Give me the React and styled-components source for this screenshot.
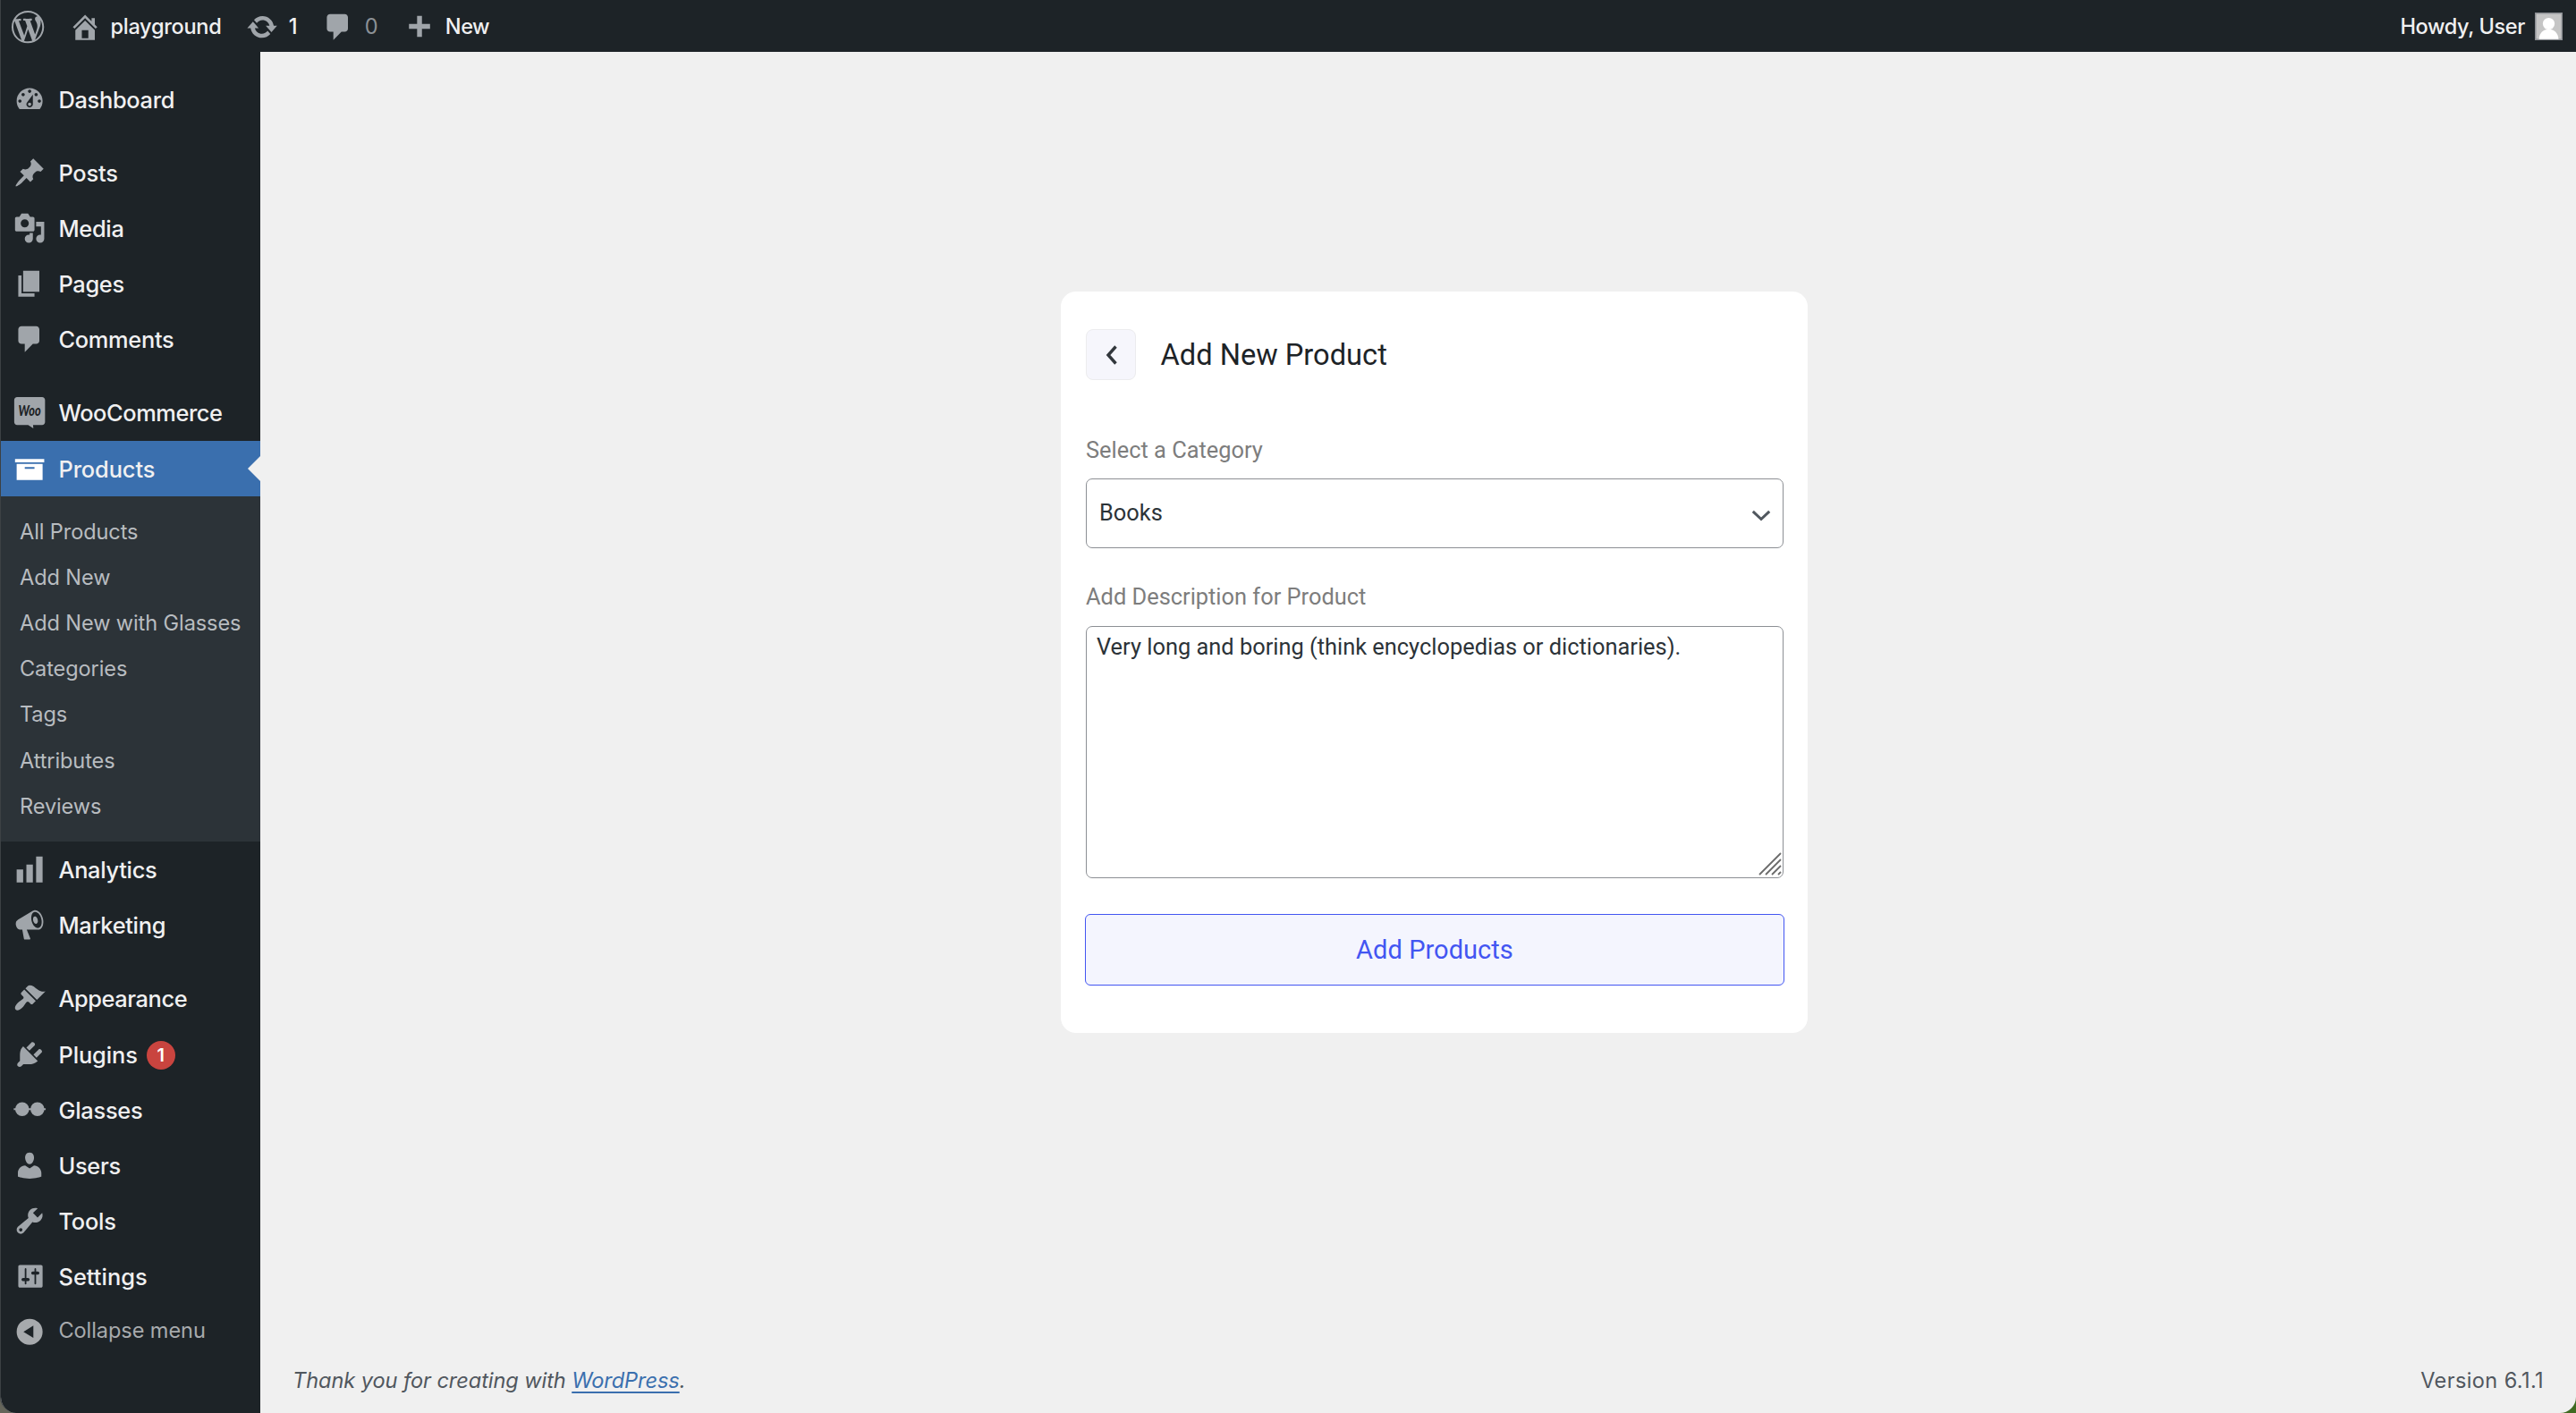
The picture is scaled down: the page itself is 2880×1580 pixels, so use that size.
import React from "react";
import styled, { createGlobalStyle, css } from "styled-components";

const icons = {
  wordpress: "M20 10c0-5.51-4.49-10-10-10C4.48 0 0 4.49 0 10c0 5.52 4.48 10 10 10 5.51 0 10-4.48 10-10zM7.78 15.37L4.37 6.22c.55-.02 1.17-.08 1.17-.08.5-.06.44-1.13-.06-1.11 0 0-1.45.11-2.37.11-.18 0-.37 0-.58-.01C4.12 2.69 6.87 1.11 10 1.11c2.33 0 4.45.87 6.05 2.34-.68-.11-1.65.39-1.65 1.58 0 .74.45 1.36.9 2.1.35.61.55 1.36.55 2.46 0 1.49-1.4 5-1.4 5l-3.03-8.37c.54-.02.82-.17.82-.17.5-.05.44-1.25-.06-1.22 0 0-1.44.12-2.38.12-.87 0-2.33-.12-2.33-.12-.5-.03-.56 1.2-.06 1.22l.92.08 1.26 3.41zM17.41 10c.24-.64.74-1.87.43-4.25.7 1.29 1.05 2.71 1.05 4.25 0 3.29-1.73 6.24-4.4 7.78.97-2.59 1.94-5.2 2.92-7.78zM6.1 18.09C3.12 16.65 1.11 13.53 1.11 10c0-1.3.23-2.48.72-3.59C3.25 10.3 4.67 14.2 6.1 18.09zm4.03-6.63l2.58 6.98c-.86.29-1.76.45-2.71.45-.79 0-1.57-.11-2.29-.33.81-2.38 1.62-4.74 2.42-7.1z",
  home: "M16 8.5l1.53 1.53-1.06 1.06L10 4.6l-6.47 6.49-1.06-1.06L10 2.5l4 4v-2h2v4zm-6-2.46l6 5.99V18H4v-5.97zM12 17v-5H8v5h4z",
  update: "M10.2 3.28c3.53 0 6.43 2.61 6.92 6h2.08l-3.5 4-3.5-4h2.32c-.45-1.97-2.21-3.45-4.32-3.45-1.45 0-2.73.71-3.54 1.78L4.95 5.66C6.23 4.2 8.11 3.28 10.2 3.28zm-.4 13.44c-3.52 0-6.43-2.61-6.92-6H.8l3.5-4c1.17 1.33 2.33 2.67 3.5 4H5.48c.45 1.97 2.21 3.45 4.32 3.45 1.45 0 2.73-.71 3.54-1.78l1.71 1.95c-1.28 1.46-3.15 2.38-5.25 2.38z",
  comments: "M5 2h9c1.1 0 2 .9 2 2v7c0 1.1-.9 2-2 2h-2l-5 5v-5H5c-1.1 0-2-.9-2-2V4c0-1.1.9-2 2-2z",
  plus: "M17 7v3h-5v5H9v-5H4V7h5V2h3v5h5z",
  dashboard: "M3.76 16h12.48c1.1-1.37 1.76-3.11 1.76-5 0-4.42-3.58-8-8-8s-8 3.58-8 8c0 1.89.66 3.63 1.76 5zM10 4c.55 0 1 .45 1 1s-.45 1-1 1-1-.45-1-1 .45-1 1-1zM6 6c.55 0 1 .45 1 1s-.45 1-1 1-1-.45-1-1 .45-1 1-1zm8 0c.55 0 1 .45 1 1s-.45 1-1 1-1-.45-1-1 .45-1 1-1zm-5.37 5.55L12 7v6c0 1.1-.9 2-2 2s-2-.9-2-2c0-.57.24-1.08.63-1.45zM4 10c.55 0 1 .45 1 1s-.45 1-1 1-1-.45-1-1 .45-1 1-1zm12 0c.55 0 1 .45 1 1s-.45 1-1 1-1-.45-1-1 .45-1 1-1zm-5 3c0-.55-.45-1-1-1s-1 .45-1 1 .45 1 1 1 1-.45 1-1z",
  post: "M10.44 3.02l1.82-1.82 6.36 6.35-1.83 1.82c-1.05-.68-2.48-.57-3.41.36l-.75.75c-.92.93-1.04 2.35-.35 3.41l-1.83 1.82-2.41-2.41-2.8 2.79c-.42.42-3.38 2.71-3.8 2.29s1.86-3.39 2.28-3.81l2.79-2.79L4.1 9.36l1.83-1.82c1.05.69 2.48.57 3.4-.36l.75-.75c.93-.92 1.05-2.35.36-3.41z",
  media: "M13 11V4c0-.55-.45-1-1-1h-1.67L9 1H5L3.67 3H2c-.55 0-1 .45-1 1v7c0 .55.45 1 1 1h10c.55 0 1-.45 1-1zM7 4.5c1.38 0 2.5 1.12 2.5 2.5S8.38 9.5 7 9.5 4.5 8.38 4.5 7 5.62 4.5 7 4.5zM14 6h5v10.5c0 1.38-1.12 2.5-2.5 2.5S14 17.88 14 16.5s1.12-2.5 2.5-2.5c.17 0 .34.02.5.05V9h-3V6zm-4 8.05V13h2v3.5c0 1.38-1.12 2.5-2.5 2.5S7 17.88 7 16.5 8.12 14 9.5 14c.17 0 .34.02.5.05z",
  page: "M6 15V2h10v13H6zm-1 1h8v2H3V5h2v11z",
  archive: "M19 4v2H1V4h18zM2 7h16v10H2V7zm11 3V9H7v1h6z",
  chart: "M18 18V2h-4v16h4zm-6 0V7H8v11h4zm-6 0v-8H2v8h4z",
  megaphone: "M18.15 5.94c.46 1.62.38 3.22-.02 4.48-.42 1.28-1.26 2.18-2.3 2.48-.16.06-.26.06-.4.06-.06.02-.12.02-.18.02-.06.02-.14.02-.22.02h-6.8l2.22 5.5c.02.14-.06.26-.14.34-.08.1-.24.16-.34.16H6.95c-.1 0-.26-.06-.34-.16-.08-.08-.16-.2-.14-.34l-1-5.5H4.25l-.02-.02c-.5.06-1.08-.18-1.54-.62s-.88-1.08-1.06-1.88c-.24-.8-.2-1.56-.02-2.2.18-.62.58-1.08 1.06-1.3l.02-.02 9-5.4c.1-.06.18-.1.24-.16.06-.04.14-.08.24-.12.16-.08.28-.12.5-.18 1.04-.3 2.24.1 3.22.98s1.84 2.24 2.26 3.86zm-2.58 5.98h-.02c.4-.1.74-.34 1.04-.7.58-.7.86-1.76.86-3.04 0-.64-.1-1.3-.28-1.98-.34-1.36-1.02-2.5-1.78-3.24s-1.68-1.1-2.46-.88c-.82.22-1.4.96-1.7 2-.32 1.04-.28 2.36.06 3.72.38 1.36 1 2.5 1.8 3.24.78.74 1.62 1.1 2.48.88zm-2.54-7.08c.22-.04.42-.02.62.04.38.16.76.48 1.02 1s.42 1.2.42 1.78c0 .3-.04.56-.12.8-.18.48-.44.84-.86.94-.34.1-.8-.06-1.14-.4s-.64-.86-.78-1.5c-.18-.62-.12-1.24.02-1.72s.48-.84.82-.94z",
  appearance: "M14.48 11.06L7.41 3.99l1.5-1.5c.5-.56 2.3-.47 3.51.32 1.21.8 1.43 1.28 2.91 2.1 1.18.64 2.45 1.26 4.45.85zm-.71.71L6.7 4.7 4.93 6.47c-.39.39-.39 1.02 0 1.41l1.06 1.06c.39.39.39 1.03 0 1.42-.6.6-1.43 1.11-2.21 1.69-.35.26-.7.53-1.01.84C1.43 14.23.4 16.08 1.4 17.07c.99 1 2.84-.03 4.18-1.36.31-.31.58-.66.85-1.02.57-.78 1.08-1.61 1.69-2.21.39-.39 1.02-.39 1.41 0l1.06 1.06c.39.39 1.02.39 1.41 0z",
  plugins: "M13.11 4.36L9.87 7.6 8 5.73l3.24-3.24c.35-.34 1.05-.2 1.56.32.52.51.66 1.21.31 1.55zm-8 1.77l.91-1.12 9.01 9.01-1.19.84c-.71.71-2.63 1.16-3.82 1.16H6.14L4.9 17.26c-.59.59-1.54.59-2.12 0-.59-.58-.59-1.53 0-2.12l1.24-1.24v-3.88c0-1.13.4-3.19 1.09-3.89zm7.26 3.97l3.24-3.24c.34-.35 1.04-.21 1.55.31.52.51.66 1.21.31 1.55l-3.24 3.25z",
  users: "M10 9.25c-2.27 0-2.73-3.44-2.73-3.44C7 4.02 7.82 2 9.97 2c2.16 0 2.98 2.02 2.71 3.81 0 0-.41 3.44-2.68 3.44zm0 2.57L12.72 10c2.39 0 4.52 2.33 4.52 4.53v2.49s-3.65 1.13-7.24 1.13c-3.65 0-7.24-1.13-7.24-1.13v-2.49c0-2.25 1.94-4.48 4.47-4.48z",
  tools: "M16.68 9.77c-1.34 1.34-3.3 1.67-4.95.99l-5.41 6.52c-.99.99-2.59.99-3.58 0s-.99-2.59 0-3.57l6.52-5.42c-.68-1.65-.35-3.61.99-4.95 1.28-1.28 3.12-1.62 4.72-1.06l-2.89 2.89 2.82 2.82 2.86-2.87c.53 1.58.18 3.39-1.08 4.65zM3.81 16.21c.4.39 1.04.39 1.43 0 .4-.4.4-1.04 0-1.43-.39-.4-1.03-.4-1.43 0-.39.39-.39 1.03 0 1.43z",
  settings: "M18 16V4c0-.55-.45-1-1-1H4c-.55 0-1 .45-1 1v12c0 .55.45 1 1 1h13c.55 0 1-.45 1-1zM8 11h1c.55 0 1 .45 1 1s-.45 1-1 1H8v1.5c0 .28-.22.5-.5.5s-.5-.22-.5-.5V13H6c-.55 0-1-.45-1-1s.45-1 1-1h1V5.5c0-.28.22-.5.5-.5s.5.22.5.5V11zm5-2h-1c-.55 0-1-.45-1-1s.45-1 1-1h1V5.5c0-.28.22-.5.5-.5s.5.22.5.5V7h1c.55 0 1 .45 1 1s-.45 1-1 1h-1v5.5c0 .28-.22.5-.5.5s-.5-.22-.5-.5V9z",
  collapse: "M10 2a8 8 0 1 0 0 16 8 8 0 0 0 0-16zm2.3 4.2v7.6L6.2 10z",
};

const menu = [
  { icon: "dashboard", label: "Dashboard", track: -0.3, space: 20 },
  { icon: "post", label: "Posts", track: -0.2 },
  { icon: "media", label: "Media", track: -0.3 },
  { icon: "page", label: "Pages", track: -0.3 },
  { icon: "comments", label: "Comments", track: -0.3, space: 20 },
  { icon: "woo", label: "WooCommerce", track: -0.42, space: 1 },
  {
    icon: "archive",
    label: "Products",
    track: -0.1,
    current: true,
    children: ["All Products", "Add New", "Add New with Glasses", "Categories", "Tags", "Attributes", "Reviews"],
  },
  { icon: "chart", label: "Analytics", track: -0.3 },
  { icon: "megaphone", label: "Marketing", track: -0.3, space: 20 },
  { icon: "appearance", label: "Appearance", track: -0.42 },
  { icon: "plugins", label: "Plugins", track: -0.1, count: 1 },
  { icon: "glasses", label: "Glasses", track: -0.25 },
  { icon: "users", label: "Users", track: -0.3 },
  { icon: "tools", label: "Tools", track: -0.2 },
  { icon: "settings", label: "Settings", track: 0.05 },
];

const DashIcon = ({ name }) => {
  if (name === "woo") {
    return (
      <IconSvg viewBox="0 0 20 20">
        <path d="M2.3.6h15.4c1 0 1.8.8 1.8 1.8V16c0 1-.8 1.8-1.8 1.8h-5.6l.2 2.1-3.2-2.1H2.3c-1 0-1.8-.8-1.8-1.8V2.4C.5 1.4 1.3.6 2.3.6z" />
        <WooText x="3.1" y="12.2" textLength="13.8" lengthAdjust="spacingAndGlyphs">Woo</WooText>
      </IconSvg>
    );
  }
  if (name === "glasses") {
    return (
      <IconSvg viewBox="0 0 20 20">
        <circle cx="5.4" cy="9.5" r="4.3" />
        <circle cx="14.8" cy="9.5" r="4.3" />
        <path d="M.2 8.9h19.7v1.2H.2z" />
      </IconSvg>
    );
  }
  return (
    <IconSvg viewBox="0 0 20 20">
      <path fillRule="evenodd" d={icons[name]} />
    </IconSvg>
  );
};

const App = () => (
  <Screen>
    <GlobalStyle />
    <Window>
      <AdminBar>
        <BarGroup>
          <BarItem $pad={12}>
            <DashIcon name="wordpress" />
          </BarItem>
          <BarItem $pad={28}>
            <DashIcon name="home" />
            <BarText $gap={10} $track={-0.3}>playground</BarText>
          </BarItem>
          <BarItem $pad={28}>
            <DashIcon name="update" />
            <BarText $gap={11}>1</BarText>
          </BarItem>
          <BarItem $pad={28}>
            <DashIcon name="comments" />
            <BarText $gap={11} $muted>0</BarText>
          </BarItem>
          <BarItem $pad={27} $drop={3}>
            <DashIcon name="plus" />
            <BarText $gap={12} $track={-0.5}>New</BarText>
          </BarItem>
        </BarGroup>
        <Account>
          <BarText $track={-0.4}>Howdy, User</BarText>
          <Avatar viewBox="0 0 31 31">
            <rect x=".75" y=".75" width="29.5" height="29.5" fill="#c5c5c5" stroke="#8c8f94" strokeWidth="1.5" />
            <circle cx="15.5" cy="12.5" r="6.6" fill="#fff" />
            <path d="M4.5 29.8c.5-6.5 4.5-11 11-11s10.5 4.5 11 11z" fill="#fff" />
          </Avatar>
        </Account>
      </AdminBar>
      <Body>
        <Sidebar>
          {menu.map((item) => (
            <MenuItem key={item.label} $space={item.space}>
              <MenuLink $current={item.current} $tall={item.count}>
                <DashIcon name={item.icon} />
                <MenuLabel $track={item.track}>{item.label}</MenuLabel>
                {item.count && <Count>{item.count}</Count>}
              </MenuLink>
              {item.children && (
                <Submenu>
                  {item.children.map((child) => (
                    <SubmenuItem key={child}>{child}</SubmenuItem>
                  ))}
                </Submenu>
              )}
            </MenuItem>
          ))}
          <Collapse>
            <DashIcon name="collapse" />
            <CollapseLabel>Collapse menu</CollapseLabel>
          </Collapse>
        </Sidebar>
        <Content>
          <Card>
            <CardHeader>
              <BackButton>
                <svg width="14" height="22" viewBox="0 0 14 22">
                  <path d="M12.5 1.5L4 11l8.500 9.500" fill="none" stroke="#32373c" strokeWidth="3.4" />
                </svg>
              </BackButton>
              <CardTitle>Add New Product</CardTitle>
            </CardHeader>
            <Label>Select a Category</Label>
            <Select>
              <span>Books</span>
              <svg width="22" height="14" viewBox="0 0 22 14">
                <path d="M1.8 1.8L11 10.5l9.2-8.7" fill="none" stroke="#50575e" strokeWidth="3" />
              </svg>
            </Select>
            <Label>Add Description for Product</Label>
            <TextAreaWrap>
              <TextArea defaultValue="Very long and boring (think encyclopedias or dictionaries)." />
              <Resizer viewBox="0 0 26 26">
                <path d="M1 25L25 1M8 25L25 8M15 25l10-10M22 25l3-3" stroke="#6b6b6b" strokeWidth="1.8" />
              </Resizer>
            </TextAreaWrap>
            <SubmitButton>Add Products</SubmitButton>
          </Card>
          <Footer>
            <Thanks>
              Thank you for creating with <FooterLink>WordPress</FooterLink>.
            </Thanks>
            <Version>Version 6.1.1</Version>
          </Footer>
        </Content>
      </Body>
    </Window>
  </Screen>
);

const GlobalStyle = createGlobalStyle`
  * {
    box-sizing: border-box;
  }
  body {
    margin: 0;
    font-family: Inter, "Liberation Sans", sans-serif;
  }
`;

const Screen = styled.div`
  height: 1580px;
  background: linear-gradient(90deg, #65655a 0 50%, #3f6a22 50%);
`;

const Window = styled.div`
  height: 100%;
  display: flex;
  flex-direction: column;
  overflow: hidden;
  border-radius: 0 0 18px 18px;
  border-left: 1px solid #3c4144;
  background: #f0f0f0;
`;

const IconSvg = styled.svg`
  width: 36.25px;
  height: 36.25px;
  flex: none;
  overflow: visible;
  fill: currentColor;
`;

const WooText = styled.text`
  font-family: Lato, sans-serif;
  font-size: 9px;
  font-weight: 900;
  font-style: italic;
  fill: #1d2327;
`;

const AdminBar = styled.header`
  height: 58px;
  flex: none;
  display: flex;
  justify-content: space-between;
  background: #1d2327;
  color: #a0a5aa;
`;

const BarGroup = styled.div`
  display: flex;
`;

const BarItem = styled.div`
  display: flex;
  align-items: center;
  padding: 3px 0 0 ${props => props.$pad}px;

  ${IconSvg} {
    margin-top: ${props => props.$drop || 0}px;
  }
`;

const BarText = styled.span`
  margin: -2px 0 0 ${props => props.$gap || 0}px;
  font-size: 23.56px;
  font-weight: ${props => (props.$muted ? 400 : 500)};
  letter-spacing: ${props => props.$track || 0}px;
  color: ${props => (props.$muted ? "#8c9196" : "#f0f0f1")};
`;

const Account = styled.div`
  display: flex;
  align-items: center;
  gap: 11px;
  padding: 1px 15px 0 0;

  ${BarText} {
    margin-top: 0;
  }
`;

const Avatar = styled.svg`
  width: 31px;
  height: 31px;
`;

const Body = styled.div`
  flex: 1;
  min-height: 0;
  display: flex;
`;

const Sidebar = styled.nav`
  width: 290px;
  flex: none;
  padding-top: 22px;
  background: #1d2327;
`;

const MenuItem = styled.div`
  margin-bottom: ${props => props.$space || 0}px;
`;

const MenuLink = styled.div`
  position: relative;
  display: flex;
  align-items: center;
  height: ${props => (props.$tall ? 63 : 62)}px;
  padding: ${props => (props.$tall ? 1 : 0)}px 0 0 13.8px;
  color: ${props => (props.$current ? "#fff" : "#a0a5aa")};
  background: ${props => (props.$current ? "#3a6fae" : "transparent")};

  ${props => props.$current && css`
    &::after {
      content: "";
      position: absolute;
      right: 0;
      top: 17px;
      border: 14px solid transparent;
      border-left: 0;
      border-right-color: #f0f0f0;
    }
  `}
`;

const MenuLabel = styled.span`
  margin-left: 14.4px;
  font-size: 25.4px;
  font-weight: 500;
  letter-spacing: ${props => props.$track || 0}px;
  color: #f0f0f1;
`;

const Count = styled.span`
  display: flex;
  align-items: center;
  justify-content: center;
  width: 32px;
  height: 32px;
  margin: 2px 0 0 10px;
  border-radius: 50%;
  background: #c9443f;
  color: #fff;
  font-size: 20px;
  font-weight: 600;
`;

const Submenu = styled.div`
  height: 386px;
  padding: 13.5px 0 0 21px;
  background: #2c3338;
`;

const SubmenuItem = styled.div`
  font-size: 23.56px;
  line-height: 51.2px;
  letter-spacing: -0.1px;
  color: #b8bcc0;
`;

const Collapse = styled.div`
  display: flex;
  align-items: center;
  height: 62px;
  padding-left: 13.8px;
  color: #a7aaad;
`;

const CollapseLabel = styled.span`
  margin: -4px 0 0 14.4px;
  font-size: 23.56px;
  letter-spacing: -0.08px;
`;

const Content = styled.main`
  flex: 1;
  display: flex;
  flex-direction: column;
  align-items: center;
  justify-content: space-between;
  padding-top: 268px;
`;

const Card = styled.section`
  width: 835px;
  height: 829px;
  margin-left: 36px;
  padding: 42px 27px 0 28px;
  border-radius: 17px;
  background: #fff;
  font-family: Roboto, sans-serif;
`;

const CardHeader = styled.div`
  display: flex;
  align-items: center;
  gap: 27.5px;
  margin-bottom: 58px;
`;

const BackButton = styled.button`
  display: flex;
  align-items: center;
  justify-content: center;
  width: 56px;
  height: 57px;
  padding: 0;
  border: 1px solid #ececee;
  border-radius: 8px;
  background: #f6f6fc;
`;

const CardTitle = styled.h1`
  margin: 0;
  font-size: 32.625px;
  font-weight: 400;
  color: #1d2327;
`;

const Label = styled.label`
  display: block;
  height: 52px;
  line-height: 40px;
  font-size: 25.4px;
  color: #7d7d7d;
`;

const Select = styled.div`
  display: flex;
  align-items: center;
  justify-content: space-between;
  width: 780px;
  height: 78px;
  margin-bottom: 34px;
  padding: 0 13px 0 14px;
  border: 1px solid #8c8f94;
  border-radius: 7px;
  font-size: 25.4px;
  color: #2c3338;

  span {
    margin-top: -2px;
  }

  svg {
    margin-top: 5px;
  }
`;

const TextAreaWrap = styled.div`
  position: relative;
  width: 780px;
  height: 282px;
  margin: 1px 0 40px;
`;

const TextArea = styled.textarea`
  display: block;
  width: 100%;
  height: 100%;
  padding: 4px 11px;
  border: 1px solid #8c8f94;
  border-radius: 7px;
  background: #fff;
  color: #2c3338;
  font-family: Roboto, sans-serif;
  font-size: 25.4px;
  line-height: 36px;
  resize: none;
  outline: none;
`;

const Resizer = styled.svg`
  position: absolute;
  right: 2px;
  bottom: 3px;
  width: 26px;
  height: 26px;
`;

const SubmitButton = styled.button`
  display: block;
  width: 782px;
  height: 80px;
  margin-left: -1px;
  padding: 0;
  border: 1px solid #4356f2;
  border-radius: 6px;
  background: #f4f5fe;
  color: #4356f2;
  font-family: Roboto, sans-serif;
  font-size: 29px;
  letter-spacing: 0.05px;
`;

const Footer = styled.footer`
  width: 100%;
  display: flex;
  justify-content: space-between;
  padding: 0 36px 22px 36px;
  font-size: 23.56px;
  color: #50575e;
`;

const Thanks = styled.em`
  letter-spacing: -0.06px;
`;

const FooterLink = styled.a`
  color: #3a6fae;
  text-decoration: underline;
  text-decoration-thickness: 1.5px;
  text-underline-offset: 4px;
  text-decoration-skip-ink: none;
`;

const Version = styled.span`
  letter-spacing: 0.38px;
`;

export default App;
